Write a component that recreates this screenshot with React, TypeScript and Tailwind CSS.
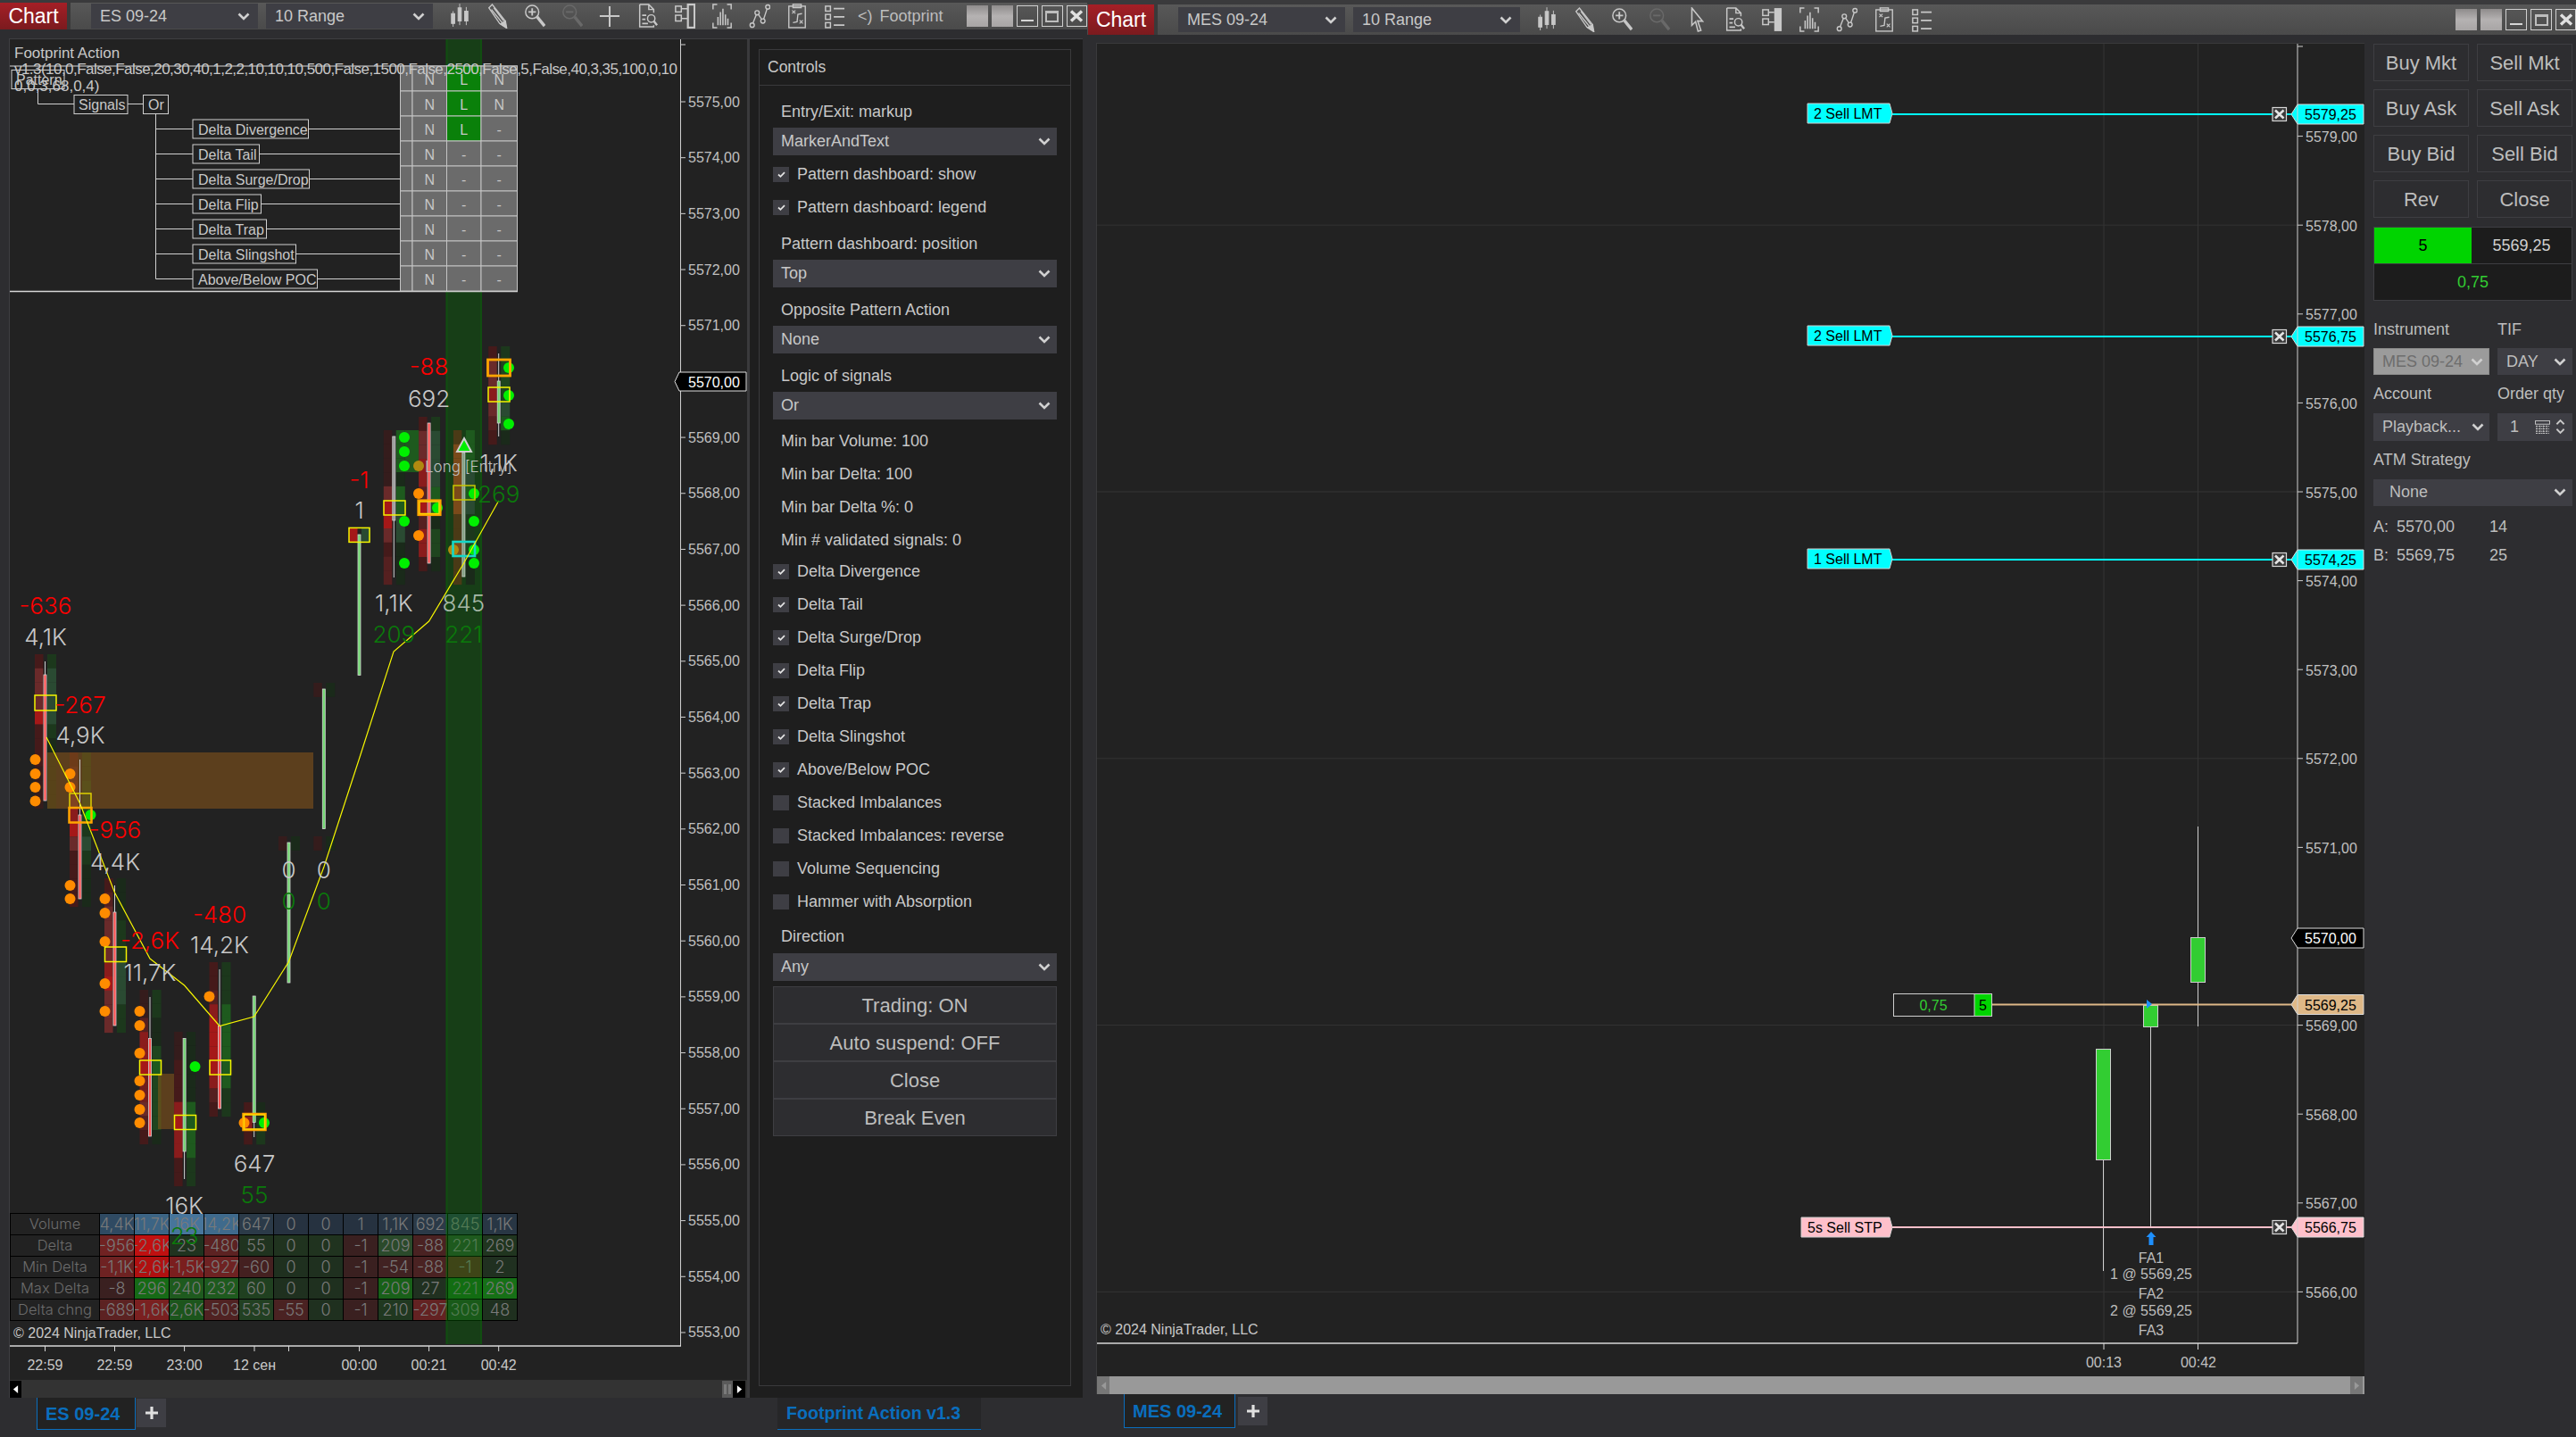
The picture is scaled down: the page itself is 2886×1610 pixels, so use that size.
import React from 'react';

const Chevron = ({ className = 'w-[14px] h-[9px]' }: { className?: string }) => (
  <svg viewBox="0 0 14 9" className={className}><polyline points="1.5,1.5 7,7 12.5,1.5" fill="none" stroke="#d0d0d0" strokeWidth="2.6" /></svg>
);

const ic = '#c8c8c8';
const Ico: Record<string, React.ReactNode> = {
  candles: (<g fill={ic} stroke={ic}><line x1="5" y1="9" x2="5" y2="28" /><rect x="3" y="12" width="4" height="12" /><line x1="13" y1="0" x2="13" y2="26" /><rect x="11" y="5" width="4" height="16" /><line x1="21" y1="4" x2="21" y2="26" /><rect x="19" y="9" width="4" height="12" /></g>),
  pencil: (<g fill="none" stroke={ic} strokeWidth="1.5"><path d="M3 5 L7 1 L22 20 L24 29 L16 24 Z" /><path d="M6 7 L19 23 M9 5 L21 21" /><path d="M17 24.5 L23 21 L24.5 29.5 Z" fill={ic} /></g>),
  zoomIn: (<g fill="none" stroke={ic}><circle cx="10" cy="10" r="8" strokeWidth="1.6" /><path d="M5.5 10 H14.5 M10 5.5 V14.5" strokeWidth="2" /><path d="M16 16 L25 27" strokeWidth="3.6" /></g>),
  zoomOut: (<g fill="none" stroke="#696969"><circle cx="10" cy="10" r="8" strokeWidth="1.6" /><path d="M5.5 10 H14.5" strokeWidth="2" /><path d="M16 16 L25 27" strokeWidth="3.6" /></g>),
  plus: (<path d="M13 3 V28 M1 15 H25" fill="none" stroke={ic} strokeWidth="2.2" />),
  cursor: (<g fill="none" stroke={ic} strokeWidth="1.7"><path d="M7 1 L20 17 L14 16.5 L18 28 L14.5 29 L11.5 17.5 L7 22 Z" /></g>),
  doc: (<g fill="none" stroke={ic} strokeWidth="1.6"><path d="M4 1 H15 L21 7 V11 M15 1 V7 H21 M4 1 V28 H21 V26" /><path d="M7 14 H12 M7 19 H11 M7 24 H14" strokeWidth="2" /><circle cx="18" cy="18" r="4.5" /><path d="M21 21 L25 26" strokeWidth="2.6" /></g>),
  panel: (<g><rect x="17" y="1" width="8" height="28" fill="none" stroke={ic} strokeWidth="2.4" /><rect x="2" y="3" width="7" height="7" fill="none" stroke={ic} strokeWidth="1.6" /><rect x="2" y="14" width="7" height="7" fill="none" stroke={ic} strokeWidth="1.6" /><path d="M9 6 H17 M9 18 H17" stroke={ic} strokeWidth="1.6" /></g>),
  panelSolid: (<g><rect x="16" y="1" width="9" height="28" fill={ic} /><rect x="2" y="3" width="7" height="7" fill="none" stroke={ic} strokeWidth="1.6" /><rect x="2" y="14" width="7" height="7" fill="none" stroke={ic} strokeWidth="1.6" /><path d="M9 6 H16 M9 18 H16" stroke={ic} strokeWidth="1.6" /></g>),
  bars: (<g fill="none" stroke={ic} strokeWidth="1.6"><path d="M7 1 H2 V7 M19 1 H24 V7 M7 29 H2 V23 M19 29 H24 V23" /><path d="M8 26 V16 M11 26 V10 M14 26 V6 M17 26 V13 M20 26 V18" strokeWidth="1.7" /></g>),
  nodes: (<g fill="none" stroke={ic} strokeWidth="1.5"><circle cx="4" cy="26" r="2.6" /><circle cx="10" cy="11" r="2.6" /><circle cx="17" cy="21" r="2.6" /><circle cx="23" cy="4" r="2.6" /><path d="M5 23.5 L9 13.5 M11.5 13 L15.5 19 M18 18.5 L22 6.5" /></g>),
  fx: (<g fill="none" stroke={ic} strokeWidth="1.5"><rect x="3" y="3" width="20" height="26" /><rect x="8" y="0.8" width="10" height="4" /><path d="M7 8 L11 12 M11 8 L7 12 M16 20 L20 24 M20 20 L16 24" strokeWidth="1.2" /><path d="M8 23 L13 22 L14 13 L19 12" /></g>),
  list: (<g><rect x="2" y="3" width="6" height="6" fill="none" stroke={ic} strokeWidth="1.6" /><rect x="2" y="13" width="6" height="6" fill="none" stroke={ic} strokeWidth="1.6" /><rect x="2" y="23" width="6" height="6" fill="none" stroke={ic} strokeWidth="1.6" /><path d="M12 6 H25 M12 16 H25 M12 26 H25" stroke={ic} strokeWidth="2" /></g>),
};

const ToolIcon = ({ name }: { name: string }) => (
  <div className="w-[42px] flex items-center justify-center shrink-0">
    <svg viewBox="0 0 26 30" className="w-[24px] h-[28px]">{Ico[name]}</svg>
  </div>
);

const WinButtons = ({ className }: { className: string }) => (
  <div className={`flex gap-[4px] items-center ${className}`}>
    <div className="w-[24px] h-[24px] bg-gradient-to-b from-[#8f8c8c] via-[#b5b2b2] to-[#a8a5a5]" />
    <div className="w-[24px] h-[24px] bg-gradient-to-b from-[#8f8c8c] via-[#b5b2b2] to-[#a8a5a5]" />
    <div className="w-[24px] h-[24px] border border-[#cfcfcf] flex items-end justify-center pb-[5px]"><div className="w-[14px] h-[2px] bg-[#d5d5d5]" /></div>
    <div className="w-[24px] h-[24px] border border-[#cfcfcf] flex items-center justify-center"><div className="w-[15px] h-[13px] border-2 border-[#bdbdbd] border-t-[3px]" /></div>
    <div className="w-[23px] h-[24px] border border-[#cfcfcf] flex items-center justify-center">
      <svg viewBox="0 0 16 14" className="w-[16px] h-[14px]"><path d="M2 1.5 L14 12.5 M14 1.5 L2 12.5" stroke="#e0e0e0" strokeWidth="3.4" /></svg>
    </div>
  </div>
);

const ToolSelect = ({ text }: { text: string }) => (
  <div className="w-[187px] h-[28px] bg-[#3e3e44] flex items-center justify-between pl-[10px] pr-[9px] text-[18px] text-[#c8c8c8] shrink-0">
    <span>{text}</span><Chevron />
  </div>
);

const Sel = ({ text, className = '' }: { text: string; className?: string }) => (
  <div className={`h-[31px] bg-[#3e3e44] flex items-center justify-between pl-[9px] pr-[7px] text-[18px] text-[#c8c8c8] ${className}`}>
    <span>{text}</span><Chevron />
  </div>
);

const Check = ({ text, on }: { text: string; on: boolean }) => (
  <div className="h-[37px] flex items-center text-[18px] text-[#c8c8c8]">
    <div className="w-[18px] h-[17px] bg-[#3e3e44] flex items-center justify-center mr-[9px]">
      {on && <svg viewBox="0 0 10 8" className="w-[9px] h-[7px]"><path d="M1 4 L3.8 6.6 L9 1.4" fill="none" stroke="#e4e4e4" strokeWidth="2" /></svg>}
    </div>
    <span>{text}</span>
  </div>
);

const Lab = ({ text, className = '' }: { text: string; className?: string }) => (
  <div className={`h-[24px] leading-[24px] pl-[9px] text-[18px] text-[#c8c8c8] ${className}`}>{text}</div>
);

const CtlBtn = ({ text }: { text: string }) => (
  <div className="h-[42px] bg-[#2d2d30] border border-[#3e3e42] flex items-center justify-center text-[22px] text-[#bdbdbd]">{text}</div>
);

const Controls = () => (
  <div className="w-[373px] h-full bg-[#1e1e1e] pt-[11px] pl-[10px] shrink-0">
    <div className="w-[350px] h-[1498px] border border-[#3a3a3c]">
      <div className="h-[40px] border-b border-[#3a3a3c] flex items-center pl-[9px] text-[17.5px] text-[#c8c8c8]">Controls</div>
      <div className="pl-[15px] pr-[15px] flex flex-col">
        <Lab text="Entry/Exit: markup" className="mt-[17px]" />
        <Sel text="MarkerAndText" className="mt-[6px]" />
        <div className="mt-[3px]"><Check text="Pattern dashboard: show" on /></div>
        <Check text="Pattern dashboard: legend" on />
        <Lab text="Pattern dashboard: position" className="mt-[10px]" />
        <Sel text="Top" className="mt-[6px]" />
        <Lab text="Opposite Pattern Action" className="mt-[13px]" />
        <Sel text="None" className="mt-[6px]" />
        <Lab text="Logic of signals" className="mt-[12.5px]" />
        <Sel text="Or" className="mt-[6.5px]" />
        <div className="h-[37px] leading-[37px] mt-[5.5px] pl-[9px] text-[18px] text-[#c8c8c8]">Min bar Volume: 100</div>
        <div className="h-[37px] leading-[37px] pl-[9px] text-[18px] text-[#c8c8c8]">Min bar Delta: 100</div>
        <div className="h-[37px] leading-[37px] pl-[9px] text-[18px] text-[#c8c8c8]">Min bar Delta %: 0</div>
        <div className="h-[35px] leading-[37px] pl-[9px] text-[18px] text-[#c8c8c8]">Min # validated signals: 0</div>
        <Check text="Delta Divergence" on />
        <Check text="Delta Tail" on />
        <Check text="Delta Surge/Drop" on />
        <Check text="Delta Flip" on />
        <Check text="Delta Trap" on />
        <Check text="Delta Slingshot" on />
        <Check text="Above/Below POC" on />
        <Check text="Stacked Imbalances" on={false} />
        <Check text="Stacked Imbalances: reverse" on={false} />
        <Check text="Volume Sequencing" on={false} />
        <Check text="Hammer with Absorption" on={false} />
        <Lab text="Direction" className="mt-[8.5px]" />
        <Sel text="Any" className="mt-[7px]" />
        <div className="mt-[6px] flex flex-col">
          <CtlBtn text="Trading: ON" />
          <CtlBtn text="Auto suspend: OFF" />
          <CtlBtn text="Close" />
          <CtlBtn text="Break Even" />
        </div>
      </div>
    </div>
  </div>
);

/* ---------- left chart ---------- */
const RED: Record<string, string> = { '1': '#351c1c', '2': '#451a1a', '3': '#552020', '4': '#6a2a2a', '5': '#701e1e', '6': '#8a1c1c', '7': '#a51818', a: '#5a3a18', b: '#7a4a1a', c: '#4a3a16' };
const GRN: Record<string, string> = { '1': '#1a2a1a', '2': '#1c381c', '3': '#1f451f', '4': '#2a4a32', '5': '#1e5a1e', '6': '#1c661c' };
const CELL = 15.72;

const bars: { c: number; top: number; L: string; R: string }[] = [
  { c: 50.5, top: 733, L: '24447222111', R: '24444211111' },
  { c: 89.5, top: 843, L: '23346742222', R: '22333242111' },
  { c: 128.5, top: 984, L: '23444467444', R: '11122244422' },
  { c: 168, top: 1109, L: '11366755432', R: '22113533331' },
  { c: 206.6, top: 1156, L: '11222676622', R: '11111555522' },
  { c: 246, top: 1078, L: '22367777632', R: '22255555522' },
  { c: 284.7, top: 1235, L: '262', R: '122' },
  { c: 323.5, top: 937, L: '1', R: '1' },
  { c: 362.8, top: 765, L: '1', R: '1' },
  { c: 362.8, top: 937, L: '1', R: '1' },
  { c: 402.5, top: 591.4, L: '7', R: '4' },
  { c: 441.3, top: 482, L: '11114774233', R: '55515544111' },
  { c: 480.6, top: 467, L: '24466373662', R: '24444551331' },
  { c: 519.4, top: 482, L: 'cbbbbbccbcc', R: '55545422311' },
  { c: 558.7, top: 388, L: '2446432', R: '2333451' },
];

const candles: [number, number, number, number, number, string][] = [
  [50.5, 741, 897, 756, 897, '#ff5050'],
  [89.5, 851, 1007, 913, 1007, '#ff5050'],
  [128.5, 992, 1149, 1022, 1149, '#ff5050'],
  [168, 1117, 1273, 1163.5, 1273, '#ff5050'],
  [206.6, 1163.5, 1321, 1163.5, 1290, '#70d870'],
  [246, 1086, 1242, 1149.5, 1242, '#ff5050'],
  [284.7, 1116, 1274, 1116, 1257.5, '#70d870'],
  [323.5, 944, 1101, 944, 1101, '#70d870'],
  [362.8, 772, 928.6, 772, 928.6, '#70d870'],
  [402.5, 599, 756.4, 599, 756.4, '#70d870'],
  [441.3, 489, 647, 489, 583, '#9a9a9a'],
  [480.6, 474, 631, 474, 631, '#ff5050'],
  [519.4, 507, 646, 507, 646, '#7fa07f'],
  [558.7, 396, 489, 427, 474, '#70d870'],
];

const orangeDots: [number, number][] = [
  [39.5, 851], [39.5, 867], [39.5, 882], [39.5, 897.5], [78.5, 867], [78.5, 882], [78.5, 992], [78.5, 1007],
  [117.5, 1007], [117.5, 1023], [117.5, 1055], [117.5, 1102], [117.5, 1133],
  [156.5, 1133], [156.5, 1149], [156.5, 1180], [156.5, 1211], [156.5, 1227], [156.5, 1243], [156.5, 1258],
  [234.5, 1116.5], [273.5, 1258], [469, 553], [469, 600],
];
const dimOrange: [number, number][] = [[469, 522], [508, 616]];
const greenDots: [number, number][] = [
  [101.5, 913], [218.5, 1195], [296, 1258], [453, 490], [453, 506], [453, 522], [453, 584], [453, 631], [490, 569],
  [531, 553], [531, 584], [531, 616], [531, 631], [570, 412], [570, 443], [570, 475],
];
const boxes: [number, number, number, number, string, number][] = [
  [39, 779, 24, 17, '#f5f500', 1.5], [78, 889, 24, 16, '#e0d000', 1.5], [77.5, 905, 25, 16.5, '#ffa500', 2.5],
  [117.5, 1061, 24, 16.5, '#f5f500', 1.5], [156.5, 1188, 24, 16, '#f5f500', 1.5], [195.5, 1249.5, 24, 16, '#f5f500', 1.5],
  [235, 1188, 23.5, 16, '#f5f500', 1.5], [272.5, 1248, 25, 18, '#ffa500', 2.5], [273.5, 1249, 23, 16, '#ffd700', 1.5],
  [391, 591.4, 23, 16, '#f5f500', 1.5], [430, 561, 24, 16, '#f5f500', 1.5], [468.5, 560.5, 25, 16.5, '#ffa500', 2.2], [470, 562, 22, 13.5, '#ffd700', 1.5],
  [508, 544, 24, 16, '#c8c800', 1.5], [507.5, 607, 24.5, 16, '#14d8c8', 2.6], [547, 434, 24, 16, '#f5f500', 1.5], [546.5, 403, 25, 18, '#ffa500', 2.8],
];
const bigTexts: [number, number, string, string][] = [
  [51, 678, '-636', '#ff0000'], [51, 713, '4,1K', '#c8c8c8'], [90, 789, '-267', '#ff0000'], [90, 823.5, '4,9K', '#c8c8c8'],
  [129, 929, '-956', '#ff0000'], [129, 965, '4,4K', '#c8c8c8'], [168, 1053, '-2,6K', '#ff0000'], [168, 1089, '11,7K', '#c8c8c8'],
  [206.6, 1350, '16K', '#c8c8c8'], [206.6, 1384.5, '23', '#0a7a0a'], [246, 1024, '-480', '#ff0000'], [246, 1058, '14,2K', '#c8c8c8'],
  [285, 1303, '647', '#c8c8c8'], [285, 1338, '55', '#0a7a0a'], [323.5, 974, '0', '#c8c8c8'], [323.5, 1009, '0', '#0a7a0a'],
  [362.8, 974, '0', '#c8c8c8'], [362.8, 1009, '0', '#0a7a0a'], [402.5, 537, '-1', '#ff0000'], [402.5, 571, '1', '#c8c8c8'],
  [441.3, 675, '1,1K', '#c8c8c8'], [441.3, 710, '209', '#0a7a0a'], [480.6, 410, '-88', '#ff0000'], [480.6, 446, '692', '#c8c8c8'],
  [519.4, 675, '845', '#a8b8a8'], [519.4, 710, '221', '#0a7a0a'], [558.7, 518, '1,1K', '#c8c8c8'], [558.7, 553, '269', '#0a7a0a'],
];

const sigRows: [string, number][] = [
  ['Delta Divergence', 345.5], ['Delta Tail', 290.5], ['Delta Surge/Drop', 346.5], ['Delta Flip', 292.5],
  ['Delta Trap', 298.5], ['Delta Slingshot', 331.5], ['Above/Below POC', 355.5],
];
const dashRows = [['N', 'L', 'N'], ['N', 'L', 'N'], ['N', 'L', '-'], ['N', '-', '-'], ['N', '-', '-'], ['N', '-', '-'], ['N', '-', '-'], ['N', '-', '-'], ['N', '-', '-']];

const LeftSvg = () => {
  const priceLabels = Array.from({ length: 23 }, (_, i) => ({ y: 114 + i * 62.68, t: `${5575 - i},00` }));
  const ticks = [[50.5, '22:59'], [128.5, '22:59'], [206.6, '23:00'], [285, '12 сен'], [323.5, ''], [402.5, '00:00'], [480.6, '00:21'], [558.7, '00:42']] as [number, string][];
  return (
    <svg viewBox="11 44 827 1502" className="absolute inset-0 w-[827px] h-[1502px]">
      <rect x="499.5" y="44" width="40.5" height="1462" fill="#008000" fillOpacity="0.3" />
      <rect x="499.5" y="44" width="2" height="1462" fill="#008000" fillOpacity="0.25" />
      <rect x="538" y="44" width="2" height="1462" fill="#008000" fillOpacity="0.25" />
      {bars.map((b, i) => (
        <g key={i}>
          {b.L.split('').map((k, j) => <rect key={j} x={b.c - 11.5} y={b.top + j * CELL} width={9.5} height={CELL + 0.2} fill={RED[k]} />)}
          {b.R.split('').map((k, j) => <rect key={j} x={b.c + 2.5} y={b.top + j * CELL} width={10} height={CELL + 0.2} fill={GRN[k]} />)}
        </g>
      ))}
      <rect x="454" y="482" width="15" height="47" fill="#1e5a1e" />
      <rect x="53" y="843" width="298" height="63" fill="#965c18" fillOpacity="0.5" />
      <rect x="177" y="1203" width="18" height="62" fill="#965c18" fillOpacity="0.5" />
      {candles.map(([c, wt, wb, bt, bb, col], i) => (
        <g key={i}>
          <line x1={c} y1={wt} x2={c} y2={wb} stroke="#cfcfcf" strokeWidth="1" />
          <rect x={c - 1.5} y={bt} width="3" height={bb - bt} fill={col} stroke="#d4d4d4" strokeWidth="0.8" />
        </g>
      ))}
      {orangeDots.map(([x, y], i) => <circle key={i} cx={x} cy={y} r="6" fill="#ff8c00" />)}
      {dimOrange.map(([x, y], i) => <circle key={i} cx={x} cy={y} r="6" fill="#b08a10" />)}
      {greenDots.map(([x, y], i) => <circle key={i} cx={x} cy={y} r="6" fill="#00f000" />)}
      {boxes.map(([x, y, w, h, c, s], i) => <rect key={i} x={x} y={y} width={w} height={h} fill="none" stroke={c} strokeWidth={s} />)}
      <polygon points="520,491 528,506 512,506" fill="#00f000" stroke="#cfcfcf" strokeWidth="2" />
      <polyline points="52,826 89.5,900 128.5,1000 168,1074 206.6,1104 246,1149.5 284.7,1139 323.5,1077.5 363,971 402.5,850 441,730 480.6,696 519,632 558.7,561" fill="none" stroke="#f5f500" strokeWidth="1.2" />
      {bigTexts.map(([x, y, t, c], i) => <text key={i} x={x} y={y} textAnchor="middle" dominantBaseline="central" fill={c} fontSize="26" className="font-['Inter'] font-light">{t}</text>)}
      <text x="476" y="523" dominantBaseline="central" fill="#c0c0c0" fontSize="17" className="font-['Inter'] font-light">Long [Entry]</text>

      {/* pattern dashboard */}
      <line x1="11" y1="74" x2="580" y2="74" stroke="#d8d8d8" />
      <line x1="11" y1="326.5" x2="580" y2="326.5" stroke="#d8d8d8" strokeWidth="1.4" />
      {dashRows.map((r, i) => {
        const y = 74 + i * 28;
        return (
          <g key={i}>
            <rect x="448.5" y={y} width="13.5" height="28" fill="#6b6b6b" stroke="#c4c4c4" />
            {r.map((v, j) => {
              const xs = [462, 500.5, 539];
              const ws = [38.5, 38.5, 40.5];
              return (
                <g key={j}>
                  <rect x={xs[j]} y={y} width={ws[j]} height="28" fill={v === 'L' ? '#0a800a' : '#6b6b6b'} stroke="#c4c4c4" />
                  <text x={xs[j] + ws[j] / 2} y={y + 15} textAnchor="middle" dominantBaseline="central" fill="#c8c8c8" fontSize="16">{v}</text>
                </g>
              );
            })}
          </g>
        );
      })}
      <g fill="none" stroke="#d0d0d0">
        <path d="M42.5 100 V116.5 H83 M143 116.5 H160.5 M174.5 127 V312.5" />
        <rect x="13" y="78.5" width="59" height="21" />
        <rect x="83" y="106.5" width="60" height="21" />
        <rect x="160.5" y="106.5" width="28" height="21" />
      </g>
      {sigRows.map(([t, r], i) => {
        const y = 144.5 + i * 28;
        return (
          <g key={t}>
            <line x1="174.5" y1={y} x2="216" y2={y} stroke="#d0d0d0" />
            <line x1={r} y1={y} x2="448.5" y2={y} stroke="#d0d0d0" />
            <rect x="216" y={y - 10.5} width={r - 216} height="21" fill="none" stroke="#d0d0d0" />
            <text x="222" y={y + 0.5} dominantBaseline="central" fill="#c8c8c8" fontSize="16">{t}</text>
          </g>
        );
      })}
      <text x="88" y="117" dominantBaseline="central" fill="#c8c8c8" fontSize="16">Signals</text>
      <text x="166" y="117" dominantBaseline="central" fill="#c8c8c8" fontSize="16">Or</text>
      <text x="18" y="89" dominantBaseline="central" fill="#c8c8c8" fontSize="16">Pattern</text>
      <text x="16" y="59" dominantBaseline="central" fill="#c8c8c8" fontSize="17">Footprint Action</text>
      <text x="16" y="77" dominantBaseline="central" fill="#c8c8c8" fontSize="17" textLength="743">v1.3(10,0,False,False,20,30,40,1,2,2,10,10,10,500,False,1500,False,2500,False,5,False,40,3,35,100,0,10</text>
      <text x="16" y="96" dominantBaseline="central" fill="#c8c8c8" fontSize="17">0,0,3,68,0,4)</text>

      {/* axes */}
      <line x1="762.5" y1="44" x2="762.5" y2="1508" stroke="#cfcfcf" />
      <line x1="11" y1="1508" x2="763" y2="1508" stroke="#d8d8d8" strokeWidth="1.4" />
      <line x1="762" y1="50" x2="768" y2="50" stroke="#cfcfcf" />
      {priceLabels.map(p => (
        <g key={p.t}>
          <line x1="762" y1={p.y} x2="768" y2={p.y} stroke="#cfcfcf" />
          <text x="771" y={p.y} dominantBaseline="central" fill="#c0c0c0" fontSize="16">{p.t}</text>
        </g>
      ))}
      <polygon points="756,427.5 761,417 836,417 836,438 761,438" fill="#000" stroke="#e0e0e0" />
      <text x="771" y="428" dominantBaseline="central" fill="#fff" fontSize="16">5570,00</text>
      {ticks.map(([x, t], i) => (
        <g key={i}>
          <line x1={x} y1="1508" x2={x} y2="1514" stroke="#d8d8d8" />
          <text x={x} y="1529" textAnchor="middle" dominantBaseline="central" fill="#c8c8c8" fontSize="16">{t}</text>
        </g>
      ))}
      <text x="15" y="1493" dominantBaseline="central" fill="#c8c8c8" fontSize="16">© 2024 NinjaTrader, LLC</text>
    </svg>
  );
};

const statLabels = ['Volume', 'Delta', 'Min Delta', 'Max Delta', 'Delta chng'];
const stats: [string, string][][] = [
  [['4,4K', 'bg-[#2f4a62]'], ['11,7K', 'bg-[#3c6484]'], ['16K', 'bg-[#47759b]'], ['14,2K', 'bg-[#3f6a8c]'], ['647', 'bg-[#2b3a48]'], ['0', 'bg-[#263240]'], ['0', 'bg-[#263240]'], ['1', 'bg-[#263240]'], ['1,1K', 'bg-[#283644]'], ['692', 'bg-[#2b3a48]'], ['845', 'bg-[#2b3a48]'], ['1,1K', 'bg-[#283644]']],
  [['-956', 'bg-[#702222]'], ['-2,6K', 'bg-[#c01010]'], ['23', 'bg-[#20331f]'], ['-480', 'bg-[#5c2222]'], ['55', 'bg-[#20331f]'], ['0', 'bg-[#20331f]'], ['0', 'bg-[#20331f]'], ['-1', 'bg-[#3a2020]'], ['209', 'bg-[#2b4a2b]'], ['-88', 'bg-[#4a2222]'], ['221', 'bg-[#2b4a2b]'], ['269', 'bg-[#20351f]']],
  [['-1,1K', 'bg-[#6e2222]'], ['-2,6K', 'bg-[#b01010]'], ['-1,5K', 'bg-[#7a1e1e]'], ['-927', 'bg-[#6e2222]'], ['-60', 'bg-[#442020]'], ['0', 'bg-[#1f301f]'], ['0', 'bg-[#1f301f]'], ['-1', 'bg-[#3a2020]'], ['-54', 'bg-[#412222]'], ['-88', 'bg-[#4a2222]'], ['-1', 'bg-[#5a2c22]'], ['2', 'bg-[#203020]']],
  [['-8', 'bg-[#3a2020]'], ['296', 'bg-[#166a16]'], ['240', 'bg-[#1e5a1e]'], ['232', 'bg-[#1e5a1e]'], ['60', 'bg-[#204020]'], ['0', 'bg-[#1f301f]'], ['0', 'bg-[#1f301f]'], ['-1', 'bg-[#3a2020]'], ['209', 'bg-[#186018]'], ['27', 'bg-[#203020]'], ['221', 'bg-[#1a651a]'], ['269', 'bg-[#167016]']],
  [['-689', 'bg-[#5c2222]'], ['-1,6K', 'bg-[#7a2020]'], ['2,6K', 'bg-[#1c551c]'], ['-503', 'bg-[#502222]'], ['535', 'bg-[#224022]'], ['-55', 'bg-[#4a2222]'], ['0', 'bg-[#1f301f]'], ['-1', 'bg-[#3a2020]'], ['210', 'bg-[#203820]'], ['-297', 'bg-[#632222]'], ['309', 'bg-[#244a24]'], ['48', 'bg-[#1f301f]']],
];

const StatGrid = () => (
  <div className="absolute left-0 top-[1315px] grid grid-cols-[99px_repeat(12,38px)] auto-rows-[23px] gap-[1px] p-[1px] bg-black font-['Inter'] font-light text-[18px] text-[#7a7a7a]">
    {stats.map((row, i) => (
      <React.Fragment key={i}>
        <div className="bg-[#222222] flex items-center justify-center text-[#6c6c6c] text-[16.5px] whitespace-nowrap">{statLabels[i]}</div>
        {row.map(([t, c], j) => (
          <div key={j} className={`${c} flex items-center justify-center overflow-hidden whitespace-nowrap`}>{t}</div>
        ))}
      </React.Fragment>
    ))}
  </div>
);

/* ---------- right chart ---------- */
const RY = (p: number) => 551 + (5575 - p) * 99.6;
const rLabels = [5579, 5578, 5577, 5576, 5575, 5574, 5573, 5572, 5571, 5569, 5568, 5567, 5566];
const ordersCyan: [number, string, string][] = [[128, '2 Sell LMT', '5579,25'], [377, '2 Sell LMT', '5576,75'], [627, '1 Sell LMT', '5574,25']];

const RTag = ({ y, t, fill, text = '#000' }: { y: number; t: string; fill: string; text?: string }) => (
  <g>
    <polygon points={`2567,${y} 2574,${y - 11} 2648,${y - 11} 2648,${y + 11} 2574,${y + 11}`} fill={fill} stroke="#dcdcdc" />
    <text x="2582" y={y + 0.5} dominantBaseline="central" fill={text} fontSize="16">{t}</text>
  </g>
);
const XBox = ({ y }: { y: number }) => (
  <g>
    <rect x="2546" y={y - 7.5} width="15.5" height="15" fill="#3a3a3a" stroke="#d8d8d8" strokeWidth="1.2" />
    <path d={`M2549 ${y - 4.5} L2558.5 ${y + 4.5} M2558.5 ${y - 4.5} L2549 ${y + 4.5}`} stroke="#e4e4e4" strokeWidth="2.6" />
  </g>
);
const LTag = ({ y, t, fill, x0 }: { y: number; t: string; fill: string; x0: number }) => (
  <g>
    <polygon points={`${x0},${y - 11} 2117,${y - 11} 2120,${y} 2117,${y + 11} ${x0},${y + 11}`} fill={fill} stroke="#cfcfcf" />
    <text x={x0 + 7} y={y + 0.5} dominantBaseline="central" fill="#000" fontSize="16">{t}</text>
  </g>
);

const RightSvg = () => (
  <svg viewBox="1229 49 1420 1493" className="absolute inset-0 w-[1420px] h-[1493px]">
    {[5578, 5575, 5572, 5569, 5566].map(p => <line key={p} x1="1229" y1={RY(p)} x2="2574" y2={RY(p)} stroke="#343434" />)}
    <line x1="2357" y1="49" x2="2357" y2="1505" stroke="#343434" />
    <line x1="2462.5" y1="49" x2="2462.5" y2="1505" stroke="#343434" />
    {/* candles */}
    <line x1="2356.5" y1="1175" x2="2356.5" y2="1424" stroke="#cfcfcf" />
    <rect x="2348.5" y="1175.5" width="16" height="124" fill="#32cd32" stroke="#cfcfcf" />
    <line x1="2409.5" y1="1126" x2="2409.5" y2="1375" stroke="#cfcfcf" />
    <rect x="2401.5" y="1126.5" width="16" height="24" fill="#32cd32" stroke="#cfcfcf" />
    <line x1="2462.5" y1="926" x2="2462.5" y2="1150" stroke="#cfcfcf" />
    <rect x="2454.5" y="1050.5" width="16" height="50" fill="#32cd32" stroke="#cfcfcf" />
    {/* orders */}
    {ordersCyan.map(([y, l, r]) => (
      <g key={r}>
        <line x1="2120" y1={y} x2="2567" y2={y} stroke="#00ffff" strokeWidth="2" />
        <XBox y={y} />
        <LTag y={y - 1} t={l} fill="#00ffff" x0={2025} />
        <RTag y={y} t={r} fill="#00ffff" />
      </g>
    ))}
    <line x1="2120" y1="1375" x2="2567" y2="1375" stroke="#ffc0cb" strokeWidth="2" />
    <XBox y={1375} />
    <LTag y={1375} t="5s  Sell STP" fill="#ffc0cb" x0={2018} />
    <RTag y={1375} t="5566,75" fill="#ffc0cb" />
    <line x1="2232" y1="1125.5" x2="2567" y2="1125.5" stroke="#deb887" strokeWidth="2" />
    <rect x="2121.5" y="1113.5" width="91" height="25" fill="#222222" stroke="#d0d0d0" />
    <text x="2166" y="1126" textAnchor="middle" dominantBaseline="central" fill="#32cd32" fontSize="16">0,75</text>
    <rect x="2212" y="1113.5" width="19.5" height="25" fill="#00d400" stroke="#d0d0d0" />
    <text x="2221.5" y="1126" textAnchor="middle" dominantBaseline="central" fill="#000" fontSize="16">5</text>
    <polygon points="2405,1120 2411,1125 2405,1130" fill="#1e90ff" />
    <RTag y={1125.5} t="5569,25" fill="#deb887" />
    {/* fills */}
    <path d="M2410 1380 L2415.5 1386 H2412.5 V1395 H2407.5 V1386 H2404.5 Z" fill="#1e90ff" />
    <g fill="#bdbdbd" fontSize="16" textAnchor="middle">
      <text x="2410" y="1409.5" dominantBaseline="central">FA1</text>
      <text x="2410" y="1427" dominantBaseline="central">1 @ 5569,25</text>
      <text x="2410" y="1449" dominantBaseline="central">FA2</text>
      <text x="2410" y="1468" dominantBaseline="central">2 @ 5569,25</text>
      <text x="2410" y="1490" dominantBaseline="central">FA3</text>
    </g>
    <rect x="2340" y="1503" width="140" height="14" fill="#222222" />
    {/* axes */}
    <line x1="2574" y1="49" x2="2574" y2="1505" stroke="#cfcfcf" />
    <line x1="1229" y1="1505" x2="2574" y2="1505" stroke="#d8d8d8" strokeWidth="1.4" />
    <line x1="2574" y1="52" x2="2580" y2="52" stroke="#cfcfcf" />
    {rLabels.map(p => (
      <g key={p}>
        <line x1="2574" y1={RY(p)} x2="2580" y2={RY(p)} stroke="#cfcfcf" />
        <text x="2583" y={RY(p) + 1} dominantBaseline="central" fill="#c0c0c0" fontSize="16">{p},00</text>
      </g>
    ))}
    <polygon points="2567,1051 2574,1040 2648,1040 2648,1062 2574,1062" fill="#000" stroke="#dcdcdc" />
    <text x="2582" y="1051.5" dominantBaseline="central" fill="#fff" fontSize="16">5570,00</text>
    <line x1="2357" y1="1505" x2="2357" y2="1512" stroke="#d8d8d8" />
    <line x1="2462.5" y1="1505" x2="2462.5" y2="1512" stroke="#d8d8d8" />
    <text x="2357" y="1526" textAnchor="middle" dominantBaseline="central" fill="#c0c0c0" fontSize="16">00:13</text>
    <text x="2463" y="1526" textAnchor="middle" dominantBaseline="central" fill="#c0c0c0" fontSize="16">00:42</text>
    <text x="1233" y="1489" dominantBaseline="central" fill="#c8c8c8" fontSize="16">© 2024 NinjaTrader, LLC</text>
  </svg>
);

const TradeBtn = ({ t }: { t: string }) => (
  <div className="h-[42px] border border-[#3e3e42] flex items-center justify-center text-[22px] text-[#bdbdbd]">{t}</div>
);

const TradePanel = () => (
  <div className="w-[237px] pl-[10px] pr-[4px] text-[18px] text-[#bdbdbd] shrink-0">
    <div className="grid grid-cols-[107px_107px] gap-x-[9px] gap-y-[9px] pt-[1px]">
      {['Buy Mkt', 'Sell Mkt', 'Buy Ask', 'Sell Ask', 'Buy Bid', 'Sell Bid', 'Rev', 'Close'].map(t => <TradeBtn key={t} t={t} />)}
    </div>
    <div className="mt-[10px] border border-[#3e3e42] w-[223px] h-[83px] flex flex-col">
      <div className="flex h-[41px] border-b border-[#3e3e42]">
        <div className="w-[109px] bg-[#00d400] text-black flex items-center justify-center">5</div>
        <div className="flex-1 bg-[#1c1c1c] text-[#d0d0d0] flex items-center justify-center">5569,25</div>
      </div>
      <div className="flex-1 bg-[#1c1c1c] text-[#32cd32] flex items-center justify-center">0,75</div>
    </div>
    <div className="mt-[20px] flex h-[24px] items-center"><span className="w-[139px]">Instrument</span><span>TIF</span></div>
    <div className="mt-[9px] flex gap-[9px]">
      <div className="w-[130px] h-[30px] bg-[#9b9b9b] border border-[#8a8a8a] flex items-center justify-between pl-[9px] pr-[6px] text-[#6d6d6d]"><span>MES 09-24</span><Chevron /></div>
      <div className="w-[84px] h-[30px] bg-[#3e3e44] flex items-center justify-between pl-[10px] pr-[7px]"><span>DAY</span><Chevron /></div>
    </div>
    <div className="mt-[9px] flex h-[24px] items-center"><span className="w-[139px]">Account</span><span>Order qty</span></div>
    <div className="mt-[9.5px] flex gap-[9px]">
      <div className="w-[130px] h-[31px] bg-[#3e3e44] flex items-center justify-between pl-[10px] pr-[6px]"><span>Playback...</span><Chevron /></div>
      <div className="w-[84px] h-[31px] bg-[#3e3e44] flex items-center pl-[14px] pr-[6px]">
        <span className="w-[28px]">1</span>
        <svg viewBox="0 0 18 16" className="w-[17px] h-[15px]"><rect x="0.5" y="0.5" width="17" height="4" fill="none" stroke="#c8c8c8" /><path d="M1 7 H17 M1 10 H17 M1 13 H17 M1 15.5 H17 M2 6 V16 M6 6 V16 M10 6 V16 M14 6 V16" stroke="#c8c8c8" strokeDasharray="2 1" /></svg>
        <svg viewBox="0 0 12 18" className="w-[11px] h-[18px] ml-[6px]"><path d="M1.5 6 L6 1.5 L10.5 6 M1.5 12 L6 16.5 L10.5 12" fill="none" stroke="#c8c8c8" strokeWidth="2" /></svg>
      </div>
    </div>
    <div className="mt-[9.5px] h-[24px] flex items-center">ATM Strategy</div>
    <div className="mt-[9.5px] w-[223px] h-[30px] bg-[#3e3e44] flex items-center justify-between pl-[18px] pr-[7px]"><span>None</span><Chevron /></div>
    <div className="mt-[9.5px] flex h-[28px] items-center"><span className="w-[26px]">A:</span><span className="w-[104px]">5570,00</span><span>14</span></div>
    <div className="mt-[4px] flex h-[28px] items-center"><span className="w-[26px]">B:</span><span className="w-[104px]">5569,75</span><span>25</span></div>
  </div>
);

const Tri = ({ dir, color }: { dir: 'l' | 'r'; color: string }) => (
  <svg viewBox="0 0 8 12" className="w-[7px] h-[11px]"><polygon points={dir === 'l' ? '7,1 1,6 7,11' : '1,1 7,6 1,11'} fill={color} /></svg>
);

export default function App() {
  const leftIcons = ['candles', 'pencil', 'zoomIn', 'zoomOut', 'plus', 'doc', 'panel', 'bars', 'nodes', 'fx', 'list'];
  const rightIcons = ['candles', 'pencil', 'zoomIn', 'zoomOut', 'cursor', 'doc', 'panelSolid', 'bars', 'nodes', 'fx', 'list'];
  return (
    <div className="w-[2886px] h-[1610px] bg-[#2d2d30] flex overflow-hidden font-['Liberation_Sans',Arial,sans-serif]">
      {/* Left window */}
      <div className="w-[1218px] h-full flex flex-col shrink-0">
        <div className="h-[3px] bg-[#3a3a3c]" />
        <div className="h-[30px] flex items-center bg-gradient-to-b from-[#585858] to-[#4a4a4a]">
          <div className="w-[75px] h-[30px] bg-gradient-to-b from-[#a51f26] to-[#7b1a1e] flex items-center justify-center text-[23px] text-white shrink-0">Chart</div>
          <div className="w-[4px] h-[30px] bg-[#3a3a3a]" />
          <div className="ml-[23px]"><ToolSelect text="ES 09-24" /></div>
          <div className="ml-[9px]"><ToolSelect text="10 Range" /></div>
          <div className="ml-[9px] flex">{leftIcons.map(n => <ToolIcon key={n} name={n} />)}</div>
          <span className="ml-[5px] text-[18px] text-[#bdbdbd] whitespace-nowrap">&lt;)</span>
          <span className="ml-[8px] text-[18px] text-[#bdbdbd] whitespace-nowrap">Footprint</span>
          <WinButtons className="ml-[26px]" />
        </div>
        <div className="mt-[10px] h-[1523px] ml-[10px] w-[1203px] border-l border-[#3e3e42] border-t flex">
          <div className="w-[826px] flex flex-col shrink-0">
            <div className="relative h-[1502px] bg-[#222222] overflow-hidden">
              <StatGrid />
              <LeftSvg />
            </div>
            <div className="h-[20px] bg-[#333333] flex items-center">
              <div className="w-[13px] h-[19px] bg-black flex items-center justify-center"><Tri dir="l" color="#ffffff" /></div>
              <div className="ml-auto w-[12px] h-[19px] bg-[#5a5a5a] flex items-center justify-center gap-[2px]"><div className="w-[3px] h-[11px] bg-[#7a7a7a]" /><div className="w-[3px] h-[11px] bg-[#7a7a7a]" /></div>
              <div className="w-[14px] h-[19px] bg-black flex items-center justify-center"><Tri dir="r" color="#ffffff" /></div>
              <div className="w-[2px]" />
            </div>
          </div>
          <div className="w-[3px] h-full bg-[#3a3a3c] shrink-0" />
          <Controls />
        </div>
        <div className="flex-1 flex items-start">
          <div className="ml-[41px] w-[111px] h-[36px] bg-[#222222] border border-t-0 border-[#0a6ebd] flex items-center pl-[9px] text-[20px] font-bold text-[#0a6ebd]">ES 09-24</div>
          <div className="ml-[1px] mt-[1px] w-[33px] h-[32px] bg-[#3e3e44] flex items-center justify-center text-[#e0e0e0]">
            <svg viewBox="0 0 16 16" className="w-[16px] h-[16px]"><path d="M8 1 V15 M1 8 H15" stroke="#e0e0e0" strokeWidth="3.2" /></svg>
          </div>
          <div className="ml-[685px] w-[228px] h-[36px] bg-[#262628] border-b border-[#0a6ebd] flex items-center pl-[10px] text-[19.6px] font-bold text-[#0a6ebd]">Footprint Action v1.3</div>
        </div>
      </div>

      {/* Right window */}
      <div className="flex-1 h-full flex flex-col min-w-0">
        <div className="h-[5px] bg-[#3a3a3c]" />
        <div className="h-[34px] flex items-center bg-gradient-to-b from-[#585858] to-[#4a4a4a]">
          <div className="ml-[1px] w-[74px] h-[34px] bg-gradient-to-b from-[#a51f26] to-[#7b1a1e] flex items-center justify-center text-[23px] text-white shrink-0">Chart</div>
          <div className="w-[4px] h-[34px] bg-[#3a3a3a]" />
          <div className="ml-[23px]"><ToolSelect text="MES 09-24" /></div>
          <div className="ml-[9px]"><ToolSelect text="10 Range" /></div>
          <div className="ml-[9px] flex">{rightIcons.map(n => <ToolIcon key={n} name={n} />)}</div>
          <WinButtons className="ml-auto" />
        </div>
        <div className="mt-[9px] h-[1514px] flex">
          <div className="ml-[10px] w-[1421px] flex flex-col border-l border-t border-[#3a3a3c] shrink-0">
            <div className="relative h-[1493px] bg-[#222222] overflow-hidden"><RightSvg /></div>
            <div className="h-[20px] bg-[#999999] flex items-center justify-between">
              <div className="w-[14px] h-[20px] bg-[#777777] flex items-center justify-center"><Tri dir="l" color="#999999" /></div>
              <div className="w-[14px] h-[20px] bg-[#777777] flex items-center justify-center mr-[2px]"><Tri dir="r" color="#999999" /></div>
            </div>
          </div>
          <TradePanel />
        </div>
        <div className="flex-1 flex items-start">
          <div className="ml-[41px] w-[125px] h-[38px] bg-[#222222] border border-t-0 border-[#0a6ebd] flex items-center pl-[9px] text-[20px] font-bold text-[#0a6ebd]">MES 09-24</div>
          <div className="ml-[3px] mt-[3px] w-[33px] h-[32px] bg-[#3e3e44] flex items-center justify-center">
            <svg viewBox="0 0 16 16" className="w-[16px] h-[16px]"><path d="M8 1 V15 M1 8 H15" stroke="#e0e0e0" strokeWidth="3.2" /></svg>
          </div>
        </div>
      </div>
    </div>
  );
}
